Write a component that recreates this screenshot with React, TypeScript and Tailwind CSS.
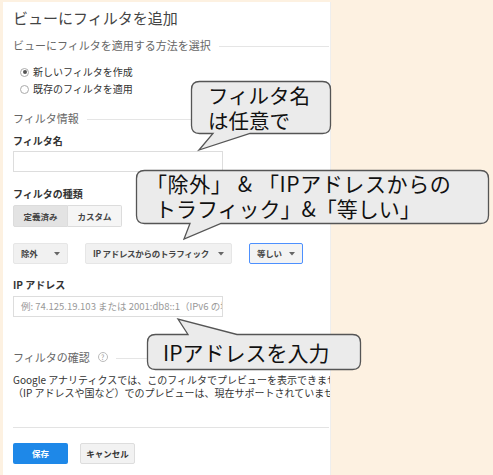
import React from 'react';

const jp = "font-['Noto_Sans_CJK_JP','Noto_Sans',sans-serif]";

function Caret() {
  return (
    <svg width="6" height="4" viewBox="0 0 6 4" className="shrink-0">
      <path d="M0 0 L6 0 L3 3.5 Z" fill="#666" />
    </svg>
  );
}

function SectionHeading({ children, extra }: { children: React.ReactNode; extra?: React.ReactNode }) {
  return (
    <div className="flex items-center gap-2 h-[14px]">
      <span className="text-[11px] leading-[14px] text-[#666] whitespace-nowrap">{children}</span>
      {extra}
      <div className="flex-1 h-px bg-[#e5e5e5] mt-[3px]" />
    </div>
  );
}

function Radio({ checked, label }: { checked?: boolean; label: string }) {
  return (
    <div className="flex items-center h-[14px] pl-[7px]">
      <span className="w-[9px] h-[9px] rounded-full border border-[#aaa] bg-white flex items-center justify-center">
        {checked && <span className="w-[4px] h-[4px] rounded-full bg-[#555]" />}
      </span>
      <span className="ml-[4px] text-[10px] leading-[14px] text-[#333]">{label}</span>
    </div>
  );
}

function Select({ label, width, focused }: { label: string; width: string; focused?: boolean }) {
  return (
    <div
      className={`${width} h-[21px] flex items-center justify-between pl-[7px] pr-[7px] rounded-[2px] border ${
        focused ? 'border-[#4d90fe] bg-[#f3f3f3]' : 'border-[#e6e6e6] bg-[#f1f1f1]'
      }`}
    >
      <span className="text-[8.5px] tracking-[-0.3px] font-bold text-[#444] whitespace-nowrap">{label}</span>
      <Caret />
    </div>
  );
}

function Bubbles() {
  const stroke = '#555';
  const fill = '#ebebeb';
  return (
    <svg className="absolute inset-0 pointer-events-none" width="493" height="475" viewBox="0 0 493 475">
      <path
        d="M199.5 81.5 H322.5 Q330.5 81.5 330.5 89.5 V125.5 Q330.5 133.5 322.5 133.5 H250 L199 150 L213 133.5 H199.5 Q191.5 133.5 191.5 125.5 V89.5 Q191.5 81.5 199.5 81.5 Z"
        fill={fill}
        stroke={stroke}
        strokeWidth="1.3"
      />
      <path
        d="M144.5 170.5 H480.5 Q488.5 170.5 488.5 178.5 V215.5 Q488.5 223.5 480.5 223.5 H221 L184 239 L190 223.5 H144.5 Q136.5 223.5 136.5 215.5 V178.5 Q136.5 170.5 144.5 170.5 Z"
        fill={fill}
        stroke={stroke}
        strokeWidth="1.3"
      />
      <path
        d="M155.5 334.5 H188 L178 319 L237 334.5 H352.5 Q360.5 334.5 360.5 342.5 V361.5 Q360.5 369.5 352.5 369.5 H155.5 Q147.5 369.5 147.5 361.5 V342.5 Q147.5 334.5 155.5 334.5 Z"
        fill={fill}
        stroke={stroke}
        strokeWidth="1.3"
      />
    </svg>
  );
}

export default function App() {
  return (
    <div className={`relative w-[493px] h-[475px] overflow-hidden bg-[#fdf1e1] ${jp}`}>
      <div className="ml-[3px] mt-[2px] w-[328px] h-[473px] bg-white border-r border-[#eee] overflow-hidden pl-[10px] pr-[1px] pt-[6px]">
        <h1 className="text-[15px] leading-[20px] text-[#444] font-normal">ビューにフィルタを追加</h1>

        <div className="mt-[10px]">
          <SectionHeading>ビューにフィルタを適用する方法を選択</SectionHeading>
        </div>

        <div className="mt-[13px] flex flex-col gap-[3px]">
          <Radio checked label="新しいフィルタを作成" />
          <Radio label="既存のフィルタを適用" />
        </div>

        <div className="mt-[15px]">
          <SectionHeading>フィルタ情報</SectionHeading>
        </div>

        <div className="mt-[9px] text-[10px] leading-[14px] font-bold text-[#333]">フィルタ名</div>
        <div className="mt-[3px] w-[210px] h-[21px] border border-[#ddd] bg-white" />

        <div className="mt-[15px] text-[10px] leading-[14px] font-bold text-[#333]">フィルタの種類</div>
        <div className="mt-[4px] flex h-[22px]">
          <div className="w-[55px] flex items-center justify-center bg-[#e3e3e3] border border-[#dcdcdc] rounded-l-[2px] text-[8.5px] font-bold text-[#444]">
            定義済み
          </div>
          <div className="w-[54px] flex items-center justify-center bg-[#f5f5f5] border border-l-0 border-[#dcdcdc] rounded-r-[2px] text-[8.5px] font-bold text-[#444]">
            カスタム
          </div>
        </div>

        <div className="mt-[16px] flex items-center">
          <Select label="除外" width="w-[55px]" />
          <div className="ml-[17px]">
            <Select label="IP アドレスからのトラフィック" width="w-[147px]" />
          </div>
          <div className="ml-[17px]">
            <Select label="等しい" width="w-[54px]" focused />
          </div>
        </div>

        <div className="mt-[14px] text-[10px] leading-[14px] font-bold text-[#333]">IP アドレス</div>
        <div className="mt-[4px] w-[210px] h-[21px] border border-[#ddd] bg-white flex items-center pl-[7px] overflow-hidden">
          <span className="text-[9.5px] text-[#999] whitespace-nowrap">
            例: 74.125.19.103 または 2001:db8::1（IPv6 の場合）
          </span>
        </div>

        <div className="mt-[33px]">
          <SectionHeading
            extra={
              <span className="w-[10px] h-[10px] rounded-full border border-[#bbb] text-[7px] leading-none text-[#999] flex items-center justify-center shrink-0">
                ?
              </span>
            }
          >
            フィルタの確認
          </SectionHeading>
        </div>

        <p className="mt-[9px] text-[10px] leading-[13px] text-[#333] whitespace-nowrap">
          Google アナリティクスでは、このフィルタでプレビューを表示できません。
          <br />
          （IP アドレスや国など）でのプレビューは、現在サポートされていません。
        </p>

        <div className="mt-[28px] h-px bg-[#e3e3e3]" />

        <div className="mt-[15px] flex items-center gap-[12px]">
          <button className="w-[55px] h-[21px] rounded-[2px] bg-[#1e88e8] text-white text-[8.5px] font-bold">保存</button>
          <button className="w-[55px] h-[21px] rounded-[2px] bg-[#f2f2f2] border border-[#ddd] text-[#333] text-[8.5px] font-bold">
            キャンセル
          </button>
        </div>
      </div>

      <Bubbles />

      <div className="absolute left-[208px] top-[83px] text-[20.5px] leading-[25px] text-[#111]">
        フィルタ名
        <br />
        は任意で
      </div>
      <div className="absolute left-[155px] top-[171px] text-[21px] leading-[25px] text-[#111] whitespace-nowrap">
        <div className="ml-[-9px] tracking-[0.6px]">「除外」 &amp; 「IPアドレスからの</div>
        <div>トラフィック」&amp;「等しい」</div>
      </div>
      <div className="absolute left-[163px] top-[339px] text-[21px] leading-[26px] text-[#111] whitespace-nowrap">
        IPアドレスを入力
      </div>
    </div>
  );
}
